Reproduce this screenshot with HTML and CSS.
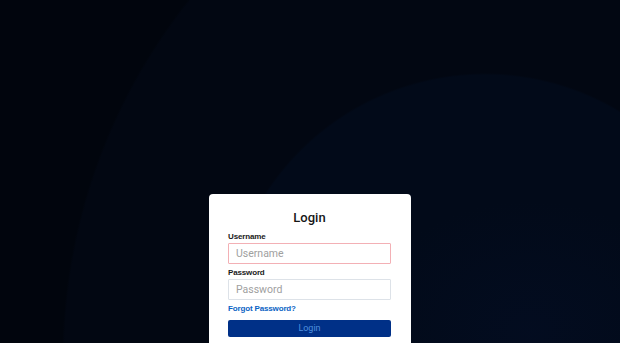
FILE: index.html
```html
<!DOCTYPE html>
<html lang="en">
<head>
<meta charset="utf-8">
<title>Login</title>
<link rel="stylesheet" href="styles.css">
</head>
<body>
<main class="page">
  <form class="card">
    <h1 class="title">Login</h1>
    <label class="label" for="username">Username</label>
    <input class="field field-error" id="username" type="text" placeholder="Username">
    <label class="label" for="password">Password</label>
    <input class="field" id="password" type="password" placeholder="Password">
    <a class="forgot" href="#">Forgot Password?</a>
    <button class="btn" type="button">Login</button>
  </form>
</main>
</body>
</html>
```

FILE: styles.css
```css
html, body {
  margin: 0;
  padding: 0;
  height: 100%;
}
body {
  font-family: Roboto, "Liberation Sans", Arial, sans-serif;
  background-color: #01050d;
  background-image:
    radial-gradient(ellipse 170px 130px at 530px 330px, rgba(6, 20, 56, 0.22), rgba(6, 20, 56, 0) 100%),
    radial-gradient(circle 262px at 485px 335px, #020a19 99.2%, rgba(2, 10, 25, 0) 100%),
    radial-gradient(circle 578px at 640px 360px, #020712 99.6%, rgba(2, 7, 18, 0) 100%);
  background-repeat: no-repeat;
  overflow: hidden;
}
.page {
  min-height: 343px;
  display: flex;
  justify-content: center;
  align-items: flex-start;
  padding-top: 194px;
  box-sizing: border-box;
}
.card {
  width: 202px;
  box-sizing: border-box;
  background: #ffffff;
  border-radius: 4px;
  padding: 16px 20px 24px 19px;
  display: flex;
  flex-direction: column;
}
.title {
  margin: 0 0 7px;
  font-size: 13px;
  line-height: 15px;
  font-weight: 500;
  color: #161616;
  text-align: center;
}
.label {
  font-family: "Liberation Sans", Arial, sans-serif;
  font-size: 8px;
  line-height: 10px;
  font-weight: 700;
  color: #1a1a1a;
  margin-bottom: 1px;
  letter-spacing: -0.15px;
}
.field {
  display: block;
  width: 100%;
  box-sizing: border-box;
  height: 21px;
  margin: 0 0 4px;
  padding: 0 7px;
  border: 1px solid #dde2e8;
  border-radius: 1px;
  font-family: Roboto, "Liberation Sans", Arial, sans-serif;
  font-size: 10.5px;
  color: #333333;
  background: #ffffff;
  outline: none;
}
.field::placeholder {
  color: #a0a0a0;
}
.field-error {
  border-color: #f3b0b5;
}
.forgot {
  font-family: "Liberation Sans", Arial, sans-serif;
  font-size: 8px;
  line-height: 10px;
  font-weight: 700;
  color: #0b63c4;
  text-decoration: none;
  align-self: flex-start;
  letter-spacing: -0.15px;
}
.btn {
  margin-top: 6px;
  height: 17px;
  width: 100%;
  border: none;
  border-radius: 2px;
  background: #003087;
  color: #4f8fdf;
  font-family: Roboto, "Liberation Sans", Arial, sans-serif;
  font-size: 9px;
  line-height: 17px;
  padding: 0;
  cursor: pointer;
}
```
